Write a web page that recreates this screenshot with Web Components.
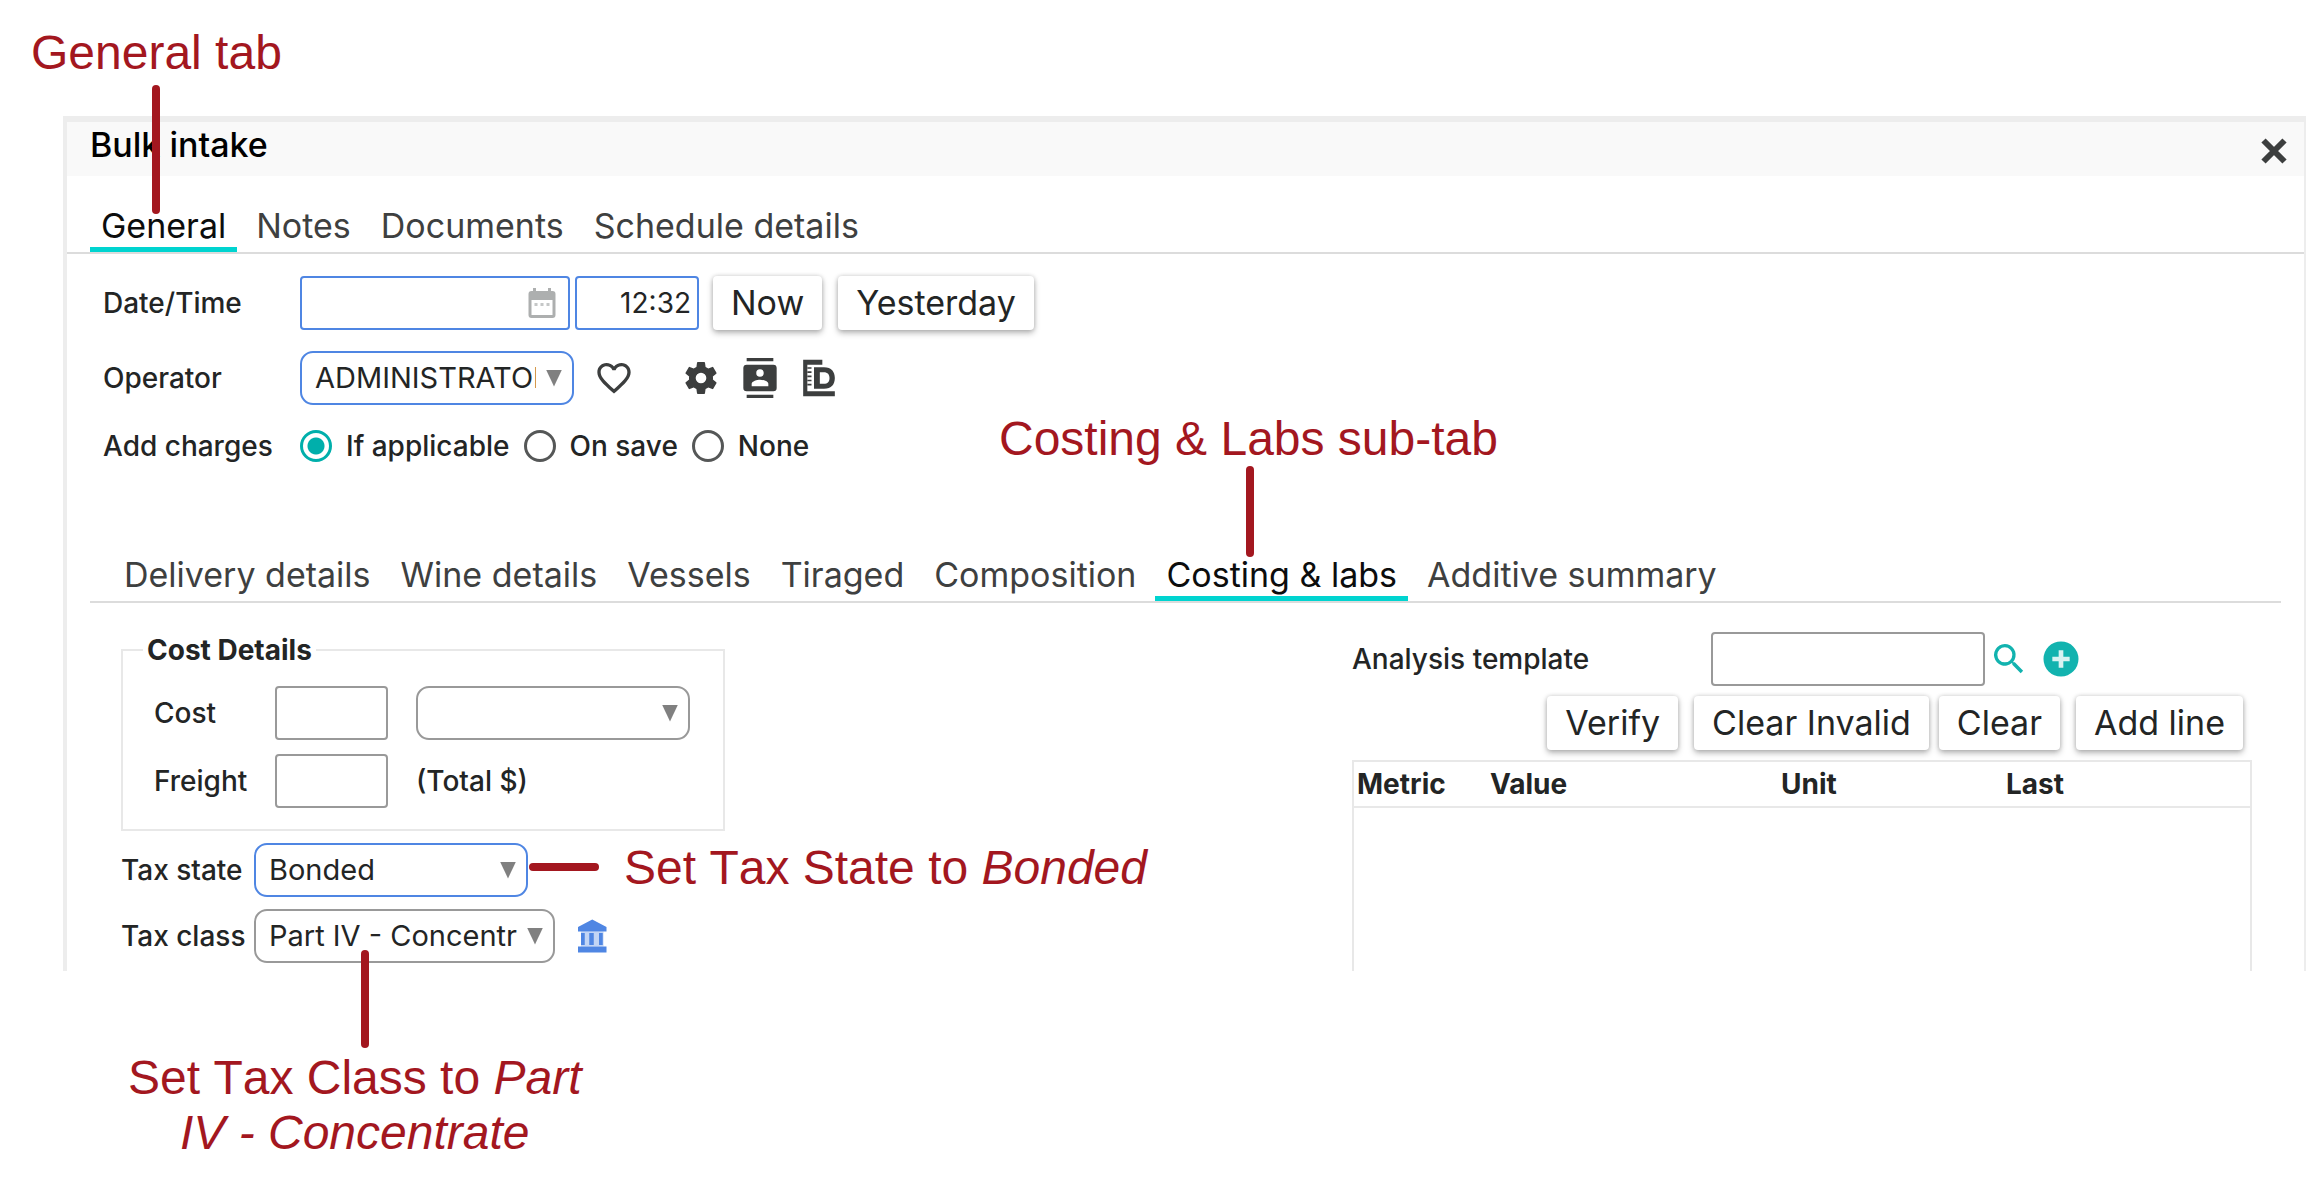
<!DOCTYPE html>
<html lang="en">
<head>
<meta charset="utf-8">
<title>Bulk intake</title>
<style>
  body {
    margin: 0;
    background: #fff;
    color: #232525;
    font: 500 28px/32px Inter, "Open Sans", sans-serif;
  }
</style>
</head>
<body>
<intake-page></intake-page>

<script>
"use strict";

function template(html) {
  const t = document.createElement('template');
  t.innerHTML = html;
  return t.content;
}

class BaseElement extends HTMLElement {
  constructor() {
    super();
    this.attachShadow({ mode: 'open' });
  }
  connectedCallback() {
    if (this.shadowRoot.childNodes.length) return;
    this.shadowRoot.appendChild(template(this.render()));
  }
  attr(name) {
    return this.getAttribute(name) || '';
  }
}

const ICONS = {
  close: '<path d="M5 5 19 19M19 5 5 19" fill="none" stroke="currentColor" stroke-width="4"/>',
  calendar: '<path d="M19 4h-1V2h-2v2H8V2H6v2H5a2 2 0 0 0-2 2v14a2 2 0 0 0 2 2h14a2 2 0 0 0 2-2V6a2 2 0 0 0-2-2zm0 16H5V10h14z"/><path d="M7 12h2v2H7zm4 0h2v2h-2zm4 0h2v2h-2z" opacity=".7"/>',
  heart: '<path d="M16.5 3c-1.74 0-3.41.81-4.5 2.09C10.91 3.81 9.24 3 7.5 3 4.42 3 2 5.42 2 8.5c0 3.78 3.4 6.86 8.55 11.54L12 21.35l1.45-1.32C18.6 15.36 22 12.28 22 8.5 22 5.42 19.58 3 16.5 3zm-4.4 15.55-.1.1-.1-.1C7.14 14.24 4 11.39 4 8.5 4 6.5 5.5 5 7.5 5c1.54 0 3.04.99 3.57 2.36h1.87C13.46 5.99 14.96 5 16.5 5c2 0 3.5 1.5 3.5 3.5 0 2.89-3.14 5.74-7.9 10.05z"/>',
  gear: '<path d="M19.14 12.94c.04-.3.06-.61.06-.94s-.02-.64-.07-.94l2.03-1.58a.49.49 0 0 0 .12-.61l-1.92-3.32a.49.49 0 0 0-.59-.22l-2.39.96a7 7 0 0 0-1.62-.94l-.36-2.54a.48.48 0 0 0-.48-.41h-3.84a.47.47 0 0 0-.47.41l-.36 2.54c-.59.24-1.13.57-1.62.94l-2.39-.96a.48.48 0 0 0-.59.22L2.74 8.87a.47.47 0 0 0 .12.61l2.03 1.58c-.05.3-.09.63-.09.94s.02.64.07.94l-2.03 1.58a.49.49 0 0 0-.12.61l1.92 3.32c.12.22.37.29.59.22l2.39-.96c.5.38 1.03.7 1.62.94l.36 2.54c.05.24.24.41.48.41h3.84c.24 0 .44-.17.47-.41l.36-2.54a7 7 0 0 0 1.62-.94l2.39.96c.22.08.47 0 .59-.22l1.92-3.32a.47.47 0 0 0-.12-.61zM12 15.2a3.2 3.2 0 1 1 0-6.4 3.2 3.2 0 0 1 0 6.4z"/>',
  contact: '<path d="M20 0H4v2h16zM4 24h16v-2H4zM20 4H4a2 2 0 0 0-2 2v12a2 2 0 0 0 2 2h16a2 2 0 0 0 2-2V6a2 2 0 0 0-2-2zm-8 2.75a2.25 2.25 0 1 1 0 4.5 2.25 2.25 0 0 1 0-4.5zM17 17H7v-1.5c0-1.67 3.33-2.5 5-2.5s5 .83 5 2.5z"/>',
  ruler: '<path d="M2.5 1H14v3H5v16h16.500v3h-19z"/><path d="M5 6h2.500M5 8.500h2.500M5 11h2.500M5 13.500h2.500M5 16h2.500" stroke="currentColor"/><path fill-rule="evenodd" d="M9 5.500h6c4.500 0 6.500 2.800 6.500 6.500s-2 6.500-6.500 6.500H9zm3.500 3v7h2.300c2.500 0 3.500-1.300 3.500-3.500s-1-3.500-3.500-3.500z"/>',
  bank: '<path d="M4 10v8h2.500v-8zm5.500 0v8h3v-8zm6.500 0v8h2.500v-8zM2 23h19v-4H2zM11.500 1 2 6v3h19V6z"/><path d="M4 9h15v10H4z" opacity=".35"/>',
  search: '<path d="M15.500 14h-.79l-.28-.27a6.500 6.500 0 1 0-.7.7l.27.28v.79l5 4.990L20.490 19zm-6 0a4.500 4.500 0 1 1 0-9 4.500 4.500 0 0 1 0 9z"/>',
  add: '<path d="M12 1.500a10.500 10.500 0 1 0 0 21 10.500 10.500 0 0 0 0-21z"/><path d="M12 6.800v10.400M6.800 12h10.400" stroke="#d8f3f2" stroke-width="2.800"/>'
};

class AppIcon extends BaseElement {
  render() {
    return `
      <style>
      :host { display: block; flex: none; width: 40px; height: 40px; color: #3c3e3e; }
      :host([small]) { width: 36px; height: 36px; }
      svg { display: block; width: 100%; height: 100%; fill: currentColor; }
      </style>
      <svg viewBox="0 0 24 24" aria-hidden="true">${ICONS[this.attr('name')]}</svg>`;
  }
}
customElements.define('app-icon', AppIcon);

class IconButton extends BaseElement {
  render() {
    return `
      <style>
      :host { display: block; flex: none; }
      button { display: block; padding: 0; border: 0; background: none; cursor: pointer; }
      app-icon { color: var(--icon-color, #3c3e3e); }
      </style>
      <button type="button" aria-label="${this.attr('label')}">
        <app-icon name="${this.attr('name')}" ${this.hasAttribute('small') ? 'small' : ''}></app-icon>
      </button>`;
  }
}
customElements.define('icon-button', IconButton);

class PushButton extends BaseElement {
  render() {
    return `
      <style>
      :host { display: block; flex: none; }
      button {
        height: 54px;
        padding: 0 18px;
        border: 0;
        border-radius: 4px;
        background: #fff;
        color: inherit;
        font: 400 34px/40px Inter, sans-serif;
        box-shadow: 0 3px 6px rgba(0, 0, 0, .28), 0 0 4px rgba(0, 0, 0, .16);
        cursor: pointer;
      }
      </style>
      <button type="button"><slot></slot></button>`;
  }
}
customElements.define('push-button', PushButton);

class TabBar extends BaseElement {
  render() {
    const tabs = this.attr('tabs').split('|').map(t =>
      `<button type="button" role="tab" aria-selected="${t === this.attr('active')}">${t.replace('&', '&amp;')}</button>`
    ).join('');
    return `
      <style>
      :host { display: block; border-bottom: 2px solid #dcdcdc; padding-left: 23px; }
      div { display: flex; gap: 8px; }
      button {
        padding: 0 11px 1px;
        border: 0;
        border-bottom: 5px solid transparent;
        background: none;
        color: #3e4040;
        font: 400 34px/40px Inter, sans-serif;
        white-space: nowrap;
        cursor: pointer;
      }
      button[aria-selected="true"] { color: #0c0d0d; border-color: #00d4d0; }
      </style>
      <div role="tablist">${tabs}</div>`;
  }
}
customElements.define('tab-bar', TabBar);

class TextField extends BaseElement {
  render() {
    const label = this.attr('label');
    return `
      <style>
      :host { display: flex; align-items: center; flex: none; }
      label { flex: none; width: var(--label-width, auto); white-space: nowrap; }
      .box { display: grid; align-items: center; width: var(--field-width, 274px); }
      input {
        grid-area: 1 / 1;
        box-sizing: border-box;
        width: 100%;
        height: 54px;
        padding: 0 6px;
        border: 2px solid #999;
        border-radius: 4px;
        background: #fff;
        color: inherit;
        font: inherit;
        font-weight: 400;
        text-align: right;
        outline: 0;
      }
      :host([required]) input { border-color: #4f86e3; }
      slot { grid-area: 1 / 1; display: block; justify-self: end; margin-right: 10px; }
      </style>
      ${label ? `<label for="field">${label}</label>` : ''}
      <div class="box">
        <input id="field" type="text" value="${this.attr('value')}" aria-label="${label || this.attr('name')}">
        <slot></slot>
      </div>`;
  }
}
customElements.define('text-field', TextField);

class SelectField extends BaseElement {
  render() {
    const label = this.attr('label');
    return `
      <style>
      :host { display: flex; align-items: center; flex: none; }
      label { flex: none; width: var(--label-width, auto); white-space: nowrap; }
      .box { display: grid; align-items: center; width: var(--field-width, 274px); }
      select {
        grid-area: 1 / 1;
        box-sizing: border-box;
        width: 100%;
        height: 54px;
        padding: 0 36px 0 13px;
        border: 2px solid #999;
        border-radius: 13px;
        background: #fff;
        color: inherit;
        font: 400 29px/32px Inter, sans-serif;
        appearance: none;
        outline: 0;
      }
      :host([required]) select { border-color: #4f86e3; }
      i {
        grid-area: 1 / 1;
        justify-self: end;
        width: 16px;
        height: 17px;
        margin-right: 12px;
        background: #808080;
        clip-path: polygon(0 0, 100% 0, 50% 100%);
        pointer-events: none;
      }
      </style>
      ${label ? `<label for="list">${label}</label>` : ''}
      <div class="box">
        <select id="list" aria-label="${label || this.attr('name')}"><option>${this.attr('value')}</option></select>
        <i></i>
      </div>`;
  }
}
customElements.define('select-field', SelectField);

class RadioGroup extends BaseElement {
  render() {
    const options = this.attr('options').split('|').map((o, i) =>
      `<input type="radio" name="group" id="r${i}" ${i ? '' : 'checked'}><label for="r${i}">${o}</label>`
    ).join('');
    return `
      <style>
      :host { display: flex; align-items: center; height: 40px; }
      .name { flex: none; width: var(--label-width); }
      div { display: flex; align-items: center; gap: 14px; }
      input {
        appearance: none;
        box-sizing: border-box;
        width: 32px;
        height: 32px;
        margin: 0;
        border: 3px solid #555757;
        border-radius: 50%;
      }
      input:checked {
        border-color: #00afab;
        background: radial-gradient(circle, #00afab 8px, transparent 9px);
      }
      </style>
      <span class="name" id="name">${this.attr('label')}</span>
      <div role="radiogroup" aria-labelledby="name">${options}</div>`;
  }
}
customElements.define('radio-group', RadioGroup);

class CostDetails extends BaseElement {
  render() {
    return `
      <style>
      :host { display: block; width: 604px; --label-width: 121px; }
      fieldset {
        display: block;
        margin: 0;
        padding: 20px 20px 21px;
        border: 2px solid #e8e8e8;
      }
      legend { padding: 0 4px; font-weight: 700; }
      div { display: flex; align-items: center; gap: 28px; padding-left: 11px; }
      div + div { margin-top: 14px; }
      text-field { --field-width: 113px; }
      </style>
      <fieldset>
        <legend>Cost Details</legend>
        <div><text-field label="Cost"></text-field><select-field name="Cost unit"></select-field></div>
        <div><text-field label="Freight"></text-field><span>(Total $)</span></div>
      </fieldset>`;
  }
}
customElements.define('cost-details', CostDetails);

class MetricTable extends BaseElement {
  render() {
    return `
      <style>
      :host { display: block; border: 2px solid #e8e8e8; border-bottom: 0; }
      table { width: 100%; border-collapse: collapse; table-layout: fixed; }
      th {
        height: 44px;
        padding: 0 0 0 3px;
        border-bottom: 2px solid #e8e8e8;
        font-weight: 700;
        text-align: left;
        vertical-align: middle;
      }
      th:nth-child(1) { width: 130px; }
      th:nth-child(2) { width: 288px; }
      th:nth-child(3) { width: 222px; }
      </style>
      <table>
        <thead><tr><th>Metric</th><th>Value</th><th>Unit</th><th>Last</th></tr></thead>
        <tbody></tbody>
      </table>`;
  }
}
customElements.define('metric-table', MetricTable);

class IntakeDialog extends BaseElement {
  render() {
    return `
      <style>
      :host {
        display: block;
        border: solid #ededed;
        border-width: 6px 2px 0 4px;
      }
      header {
        display: flex;
        justify-content: space-between;
        height: 54px;
        padding: 0 12px 0 23px;
        background: #f9f9f9;
        color: #000;
      }
      h1 { margin: 0; font: 500 34px/46px Inter, sans-serif; }
      header icon-button { align-self: center; padding-top: 4px; }
      .main-tabs { margin-top: 30px; }
      .form {
        display: grid;
        gap: 21px;
        padding: 22px 36px 89px;
        --label-width: 197px;
      }
      .row { display: flex; align-items: center; }
      .date { --field-width: 270px; }
      .date app-icon { color: #adafaf; }
      .time { --label-width: auto; --field-width: 124px; margin: 0 14px 0 5px; }
      .row push-button + push-button { margin-left: 16px; }
      .tools { display: flex; gap: 19px; margin-left: 47px; }
      .like { margin-left: 20px; }
      .sub-tabs { margin: 0 23px; }
      .panes {
        display: grid;
        grid-template-columns: minmax(0, 1231fr) minmax(0, 900fr);
        padding: 0 52px 0 54px;
      }
      .left { padding: 31px 0 8px; --label-width: 133px; }
      .left > .row { margin-top: 12px; gap: 20px; }
      .wide { --field-width: 301px; }
      .bank { --icon-color: #4f86e3; }
      .right { display: flex; flex-direction: column; gap: 10px; padding-top: 29px; }
      .template { --label-width: 359px; --icon-color: #12b3af; gap: 4px; }
      .template icon-button + icon-button { margin-left: 8px; }
      .actions { display: flex; justify-content: flex-end; gap: 16px; padding-right: 9px; }
      .pair { display: flex; gap: 10px; }
      metric-table { flex: 1; }
      </style>
      <header>
        <h1>Bulk intake</h1>
        <icon-button name="close" label="Close" small></icon-button>
      </header>
      <tab-bar class="main-tabs" tabs="General|Notes|Documents|Schedule details" active="General"></tab-bar>
      <section class="form">
        <div class="row">
          <text-field class="date" label="Date/Time" required><app-icon name="calendar" small></app-icon></text-field>
          <text-field class="time" name="Time" value="12:32" required></text-field>
          <push-button>Now</push-button>
          <push-button>Yesterday</push-button>
        </div>
        <div class="row">
          <select-field label="Operator" value="ADMINISTRATOR" required></select-field>
          <icon-button class="like" name="heart" label="Favourite"></icon-button>
          <div class="tools">
            <icon-button name="gear" label="Settings"></icon-button>
            <icon-button name="contact" label="Contacts"></icon-button>
            <icon-button name="ruler" label="Dimensions"></icon-button>
          </div>
        </div>
        <radio-group label="Add charges" options="If applicable|On save|None"></radio-group>
      </section>
      <tab-bar class="sub-tabs" active="Costing &amp; labs"
        tabs="Delivery details|Wine details|Vessels|Tiraged|Composition|Costing &amp; labs|Additive summary"></tab-bar>
      <section class="panes">
        <div class="left">
          <cost-details></cost-details>
          <div class="row"><select-field label="Tax state" value="Bonded" required></select-field></div>
          <div class="row">
            <select-field class="wide" label="Tax class" value="Part IV - Concentrate"></select-field>
            <icon-button class="bank" name="bank" label="Tax authority" small></icon-button>
          </div>
        </div>
        <div class="right">
          <div class="row template">
            <text-field label="Analysis template"></text-field>
            <icon-button name="search" label="Search"></icon-button>
            <icon-button name="add" label="Add"></icon-button>
          </div>
          <div class="actions">
            <push-button>Verify</push-button>
            <div class="pair"><push-button>Clear Invalid</push-button><push-button>Clear</push-button></div>
            <push-button>Add line</push-button>
          </div>
          <metric-table></metric-table>
        </div>
      </section>`;
  }
}
customElements.define('intake-dialog', IntakeDialog);

// Red note laid over the dialog
class CallOut extends BaseElement {
  render() {
    return `
      <style>
      :host {
        position: absolute;
        color: #a3171f;
        font: 400 48px/55px "Liberation Sans", Arial, sans-serif;
        font-kerning: none;
        text-align: center;
        white-space: nowrap;
      }
      </style>
      <slot></slot>`;
  }
}
customElements.define('call-out', CallOut);

// Leader between a note and the control it is about
class LeaderLine extends BaseElement {
  render() {
    return `
      <style>
      :host {
        position: absolute;
        width: 8px;
        height: 8px;
        border-radius: 4px;
        background: #a3171f;
      }
      </style>`;
  }
}
customElements.define('leader-line', LeaderLine);

class IntakePage extends BaseElement {
  render() {
    return `
      <style>
      :host {
        display: block;
        position: relative;
        box-sizing: border-box;
        min-height: 100vh;
        padding: 116px 12px 200px 63px;
      }
      .general { left: 31px; top: 25px; }
      .general-line { left: 152px; top: 85px; height: 129px; }
      .costing { left: 999px; top: 411px; }
      .costing-line { left: 1246px; top: 466px; height: 91px; }
      .state { left: 624px; top: 840px; }
      .state-line { left: 529px; top: 863px; width: 70px; }
      .class { left: 128px; top: 1050px; }
      .class-line { left: 361px; top: 950px; height: 98px; }
      </style>
      <intake-dialog></intake-dialog>
      <call-out class="general">General tab</call-out>
      <leader-line class="general-line"></leader-line>
      <call-out class="costing">Costing &amp; Labs sub-tab</call-out>
      <leader-line class="costing-line"></leader-line>
      <call-out class="state">Set Tax State to <em>Bonded</em></call-out>
      <leader-line class="state-line"></leader-line>
      <call-out class="class">Set Tax Class to <em>Part<br>IV - Concentrate</em></call-out>
      <leader-line class="class-line"></leader-line>`;
  }
}
customElements.define('intake-page', IntakePage);
</script>
</body>
</html>
